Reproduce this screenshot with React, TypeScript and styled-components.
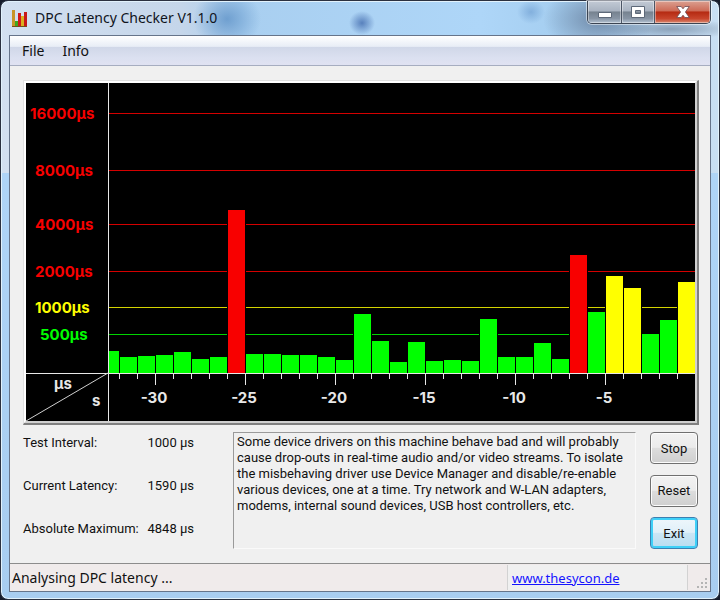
import React from "react";
import styled, { createGlobalStyle } from "styled-components";

const uiFont = `"Noto Sans", "Open Sans", sans-serif`;
const dialogFont = `Roboto, "DejaVu Sans Condensed", sans-serif`;

const GlobalStyle = createGlobalStyle`
  * { box-sizing: border-box; }
  body { margin: 0; background: #171c2b; }
`;

const Window = styled.main`
  display: flex;
  flex-direction: column;
  min-height: 100vh;
  padding: 0 8px 7px;
  border: 1px solid #2b3140;
  border-radius: 8px;
  box-shadow: inset 0 0 0 1px #e2f2fc;
  background:
    radial-gradient(ellipse 34px 30px at 226px 18px, #5f93c8cc, #5f93c800),
    radial-gradient(ellipse 13px 12px at 361px 22px, #4b74b4dd, #4b74b400),
    radial-gradient(ellipse 14px 12px at 530px 11px, #6f9fd2aa, #6f9fd200),
    radial-gradient(ellipse 56px 34px at 598px 18px, #5f7796cc, #5f779600),
    radial-gradient(ellipse 70px 10px at 670px 28px, #74889fb0, #74889f00),
    linear-gradient(90deg, #d3e0f0 0, #c5d6ea 180px, #a9cff0 240px, #aed6f8 480px, #a5cef0 560px, #c9dff3 100%) 0 0 / 100% 172px no-repeat,
    linear-gradient(#b1d7fa, #a8cdf0);
  font: 14px ${uiFont};
  color: #111;
`;

const TitleBar = styled.header`
  display: flex;
  align-items: flex-start;
  height: 34px;
`;

const Title = styled.h1`
  flex: 1;
  display: flex;
  align-items: center;
  gap: 6px;
  height: 33px;
  margin: 0;
  padding-left: 2px;
  font: 14px ${uiFont};
  color: #10141c;
`;

const Controls = styled.div`
  display: flex;
  height: 23px;
  border: 1px solid #3b4452;
  border-top: 0;
  border-radius: 0 0 5px 5px;
  box-shadow: 0 0 0 1px #ffffff80;
  overflow: hidden;
`;

const Caption = styled.button<{ $close?: boolean }>`
  display: grid;
  place-items: center;
  width: ${(p) => (p.$close ? 56 : 33)}px;
  padding: 0;
  border: 0;
  border-left: ${(p) => (p.$close ? "1px solid #4c2020" : "0")};
  box-shadow: inset 0 0 0 1px #ffffff66;
  background: ${(p) =>
    p.$close
      ? "linear-gradient(#dba091 0, #cd6b57 45%, #b52a12 50%, #c8452c 80%, #d98a72)"
      : "linear-gradient(#c2cad5 0, #a9b3c1 45%, #76828f 50%, #8895a5 80%, #b3c2d2)"};
  & + & { border-left: 1px solid #4b5565; }
`;

const Client = styled.div`
  flex: 1;
  display: flex;
  flex-direction: column;
  border: 1px solid #66748a;
  background: #f0f0f0;
`;

const MenuBar = styled.nav`
  display: flex;
  gap: 18px;
  height: 30px;
  padding: 0 12px;
  border-bottom: 1px solid #a6adc0;
  background: linear-gradient(#fff 0, #e8edf6 36%, #d0d7e8 38%, #dbe0f0 75%, #e0e2f2);
`;

const MenuItem = styled.button`
  padding: 0 0 1px;
  border: 0;
  background: none;
  font: 14px ${uiFont};
  color: #111;
`;

const Body = styled.div`
  flex: 1;
  padding: 14px 11px 14px 13px;
`;

const ChartFrame = styled.figure`
  margin: 0;
  border: solid;
  border-width: 1px 2px 2px 1px;
  border-color: #e0e0e0 #808080 #808080 #e0e0e0;
`;

const ChartBezel = styled.div`
  border: 2px solid;
  border-color: #fff #d0d0d0 #d0d0d0 #fff;
`;

const Chart = styled.svg`
  display: block;
  width: 100%;
  height: auto;
  background: #000;
  font: bold 15px Inter, sans-serif;
`;

const Lower = styled.section`
  display: grid;
  grid-template-columns: 210px 1fr 48px;
  height: 117px;
  margin: 7px 1px 0 0;
`;

const Stats = styled.dl`
  display: grid;
  grid-template-columns: 116px 55px;
  grid-auto-rows: 22px;
  row-gap: 21px;
  margin: 0;
  font: 13px/22px ${dialogFont};
  white-space: nowrap;
  dd { margin: 0; text-align: right; }
`;

const Message = styled.textarea`
  min-width: 0;
  margin: 0 14px 0 0;
  padding: 1px 3px;
  border: 1px solid;
  border-color: #9a9a9a #fafafa #fafafa #9a9a9a;
  outline: 0;
  resize: none;
  overflow: hidden;
  background: transparent;
  font: 13px/16px ${dialogFont};
  color: #111;
`;

const Buttons = styled.div`
  display: flex;
  flex-direction: column;
  justify-content: space-between;
`;

const Button = styled.button<{ $default?: boolean }>`
  height: 32px;
  padding: 0;
  border: 1px solid ${(p) => (p.$default ? "#3c7fb1" : "#707070")};
  border-radius: 4px;
  box-shadow: inset 0 0 0 ${(p) => (p.$default ? "2px #3fd0f8" : "1px #fcfcfc")};
  background: ${(p) =>
    p.$default
      ? "linear-gradient(#eef6fb 0, #e0f0f9 48%, #cbe6f5 50%, #b9dcf0)"
      : "linear-gradient(#f2f2f2 0, #ebebeb 48%, #dddddd 50%, #cfcfcf)"};
  font: 13px ${dialogFont};
  color: #111;
`;

const StatusBar = styled.footer`
  display: flex;
  height: 28px;
  border-top: 1px solid #8c8c8c;
  background: #f0ebeb;
  line-height: 27px;
`;

const StatusText = styled.span`
  flex: 1;
  padding-left: 2px;
`;

const LinkPane = styled.span`
  width: 181px;
  margin: 1px 0;
  padding-left: 4px;
  border: solid #d2d2d2;
  border-width: 0 1px;
  background: #f0f0f0;
  font-size: 13px;
  line-height: 26px;
  a { color: #1414ff; }
`;

const Grip = styled.svg`
  align-self: flex-end;
  width: 22px;
  height: 14px;
`;

const RED = "#f80000";
const YELLOW = "#ffff00";
const GREEN = "#00ff00";

const levels = [
  { label: "16000µs", y: 30, x: 4, fill: RED, line: "#d40000" },
  { label: "8000µs", y: 87, x: 9, fill: RED, line: "#d40000" },
  { label: "4000µs", y: 141, x: 9, fill: RED, line: "#d40000" },
  { label: "2000µs", y: 188, x: 9, fill: RED, line: "#d40000" },
  { label: "1000µs", y: 224, x: 9, fill: YELLOW, line: "#d4d400" },
  { label: "500µs", y: 251, x: 14, fill: GREEN, line: "#00d400" },
];

const BASE = 290;
const heights = [
  22, 16, 17, 18, 21, 14, 16, 163, 19, 19, 18, 18, 16, 13, 59, 32, 11, 31, 12,
  13, 12, 54, 16, 16, 30, 14, 118, 61, 97, 85, 39, 53, 91,
];
const barColor = (h: number) => (h > 100 ? RED : h > 66 ? YELLOW : GREEN);

function LatencyChart() {
  return (
    <Chart
      viewBox="0 0 669 338"
      shapeRendering="crispEdges"
      role="img"
      aria-label="DPC latency history"
    >
      {levels.map((l) => (
        <g key={l.label}>
          <text x={l.x} y={l.y + 6} fill={l.fill}>{l.label}</text>
          <rect x="82" y={l.y} width="587" height="1" fill={l.line} />
        </g>
      ))}
      {heights.map((h, i) => {
        const left = i === 0 ? 83 : 76 + i * 18;
        const right = 93 + i * 18;
        return (
          <g key={i}>
            <rect x={left - 1} y={BASE - h - 1} width={right - left + 2} height={h + 1} fill="#000" />
            <rect x={left} y={BASE - h} width={right - left} height={h} fill={barColor(h)} />
          </g>
        );
      })}
      <g fill="#e8e8e8">
        <rect x="0" y="290" width="669" height="1" />
        <rect x="82" y="0" width="1" height="338" />
        {heights.slice(1).map((_, i) => (
          <rect key={i} x={93 + i * 18} y="291" width="1" height={i % 5 === 2 ? 11 : 5} />
        ))}
        {[-30, -25, -20, -15, -10, -5].map((n, i) => (
          <text key={n} x={128 + i * 90} y="320" textAnchor="middle">{n}</text>
        ))}
        <text x="28" y="306">µs</text>
        <text x="66" y="323">s</text>
      </g>
      <path d="M0 338 82 290" stroke="#d0d0d0" shapeRendering="auto" />
    </Chart>
  );
}

const message = `Some device drivers on this machine behave bad and will probably
cause drop-outs in real-time audio and/or video streams. To isolate
the misbehaving driver use Device Manager and disable/re-enable
various devices, one at a time. Try network and W-LAN adapters,
modems, internal sound devices, USB host controllers, etc.`;

export default function App() {
  return (
    <>
      <GlobalStyle />
      <Window>
        <TitleBar>
          <Title>
            <svg width="18" height="18" viewBox="0 0 18 18" aria-hidden="true">
              <path fill="#c89628" d="M1 1h3v16H1z" />
              <path fill="#3fa820" d="M4 12h4v5H4z" />
              <path fill="#d01818" d="M7 4h3v13H7z" />
              <path fill="#d8b020" d="M10 7h3v10h-3z" />
              <path fill="#c81818" d="M13 3h3v14h-3z" />
              <path stroke="#73501c" d="M1 17.500h15" />
            </svg>
            DPC Latency Checker V1.1.0
          </Title>
          <Controls>
            <Caption aria-label="Minimize">
              <svg width="14" height="12" viewBox="0 0 14 12">
                <path d="M.5 6.500h13v5H.5z" fill="#fff" stroke="#5d6878" />
              </svg>
            </Caption>
            <Caption aria-label="Maximize">
              <svg width="14" height="12" viewBox="0 0 14 12">
                <path d="M.5.500h13v11H.5zM4.500 4.500h5v3h-5z" fill="#fff" stroke="#5d6878" fillRule="evenodd" />
              </svg>
            </Caption>
            <Caption aria-label="Close" $close>
              <svg width="14" height="12" viewBox="0 0 14 12">
                <path d="M.7.500h4.500L7 2.800 8.800.500h4.500L9.400 6l3.900 5.500H8.800L7 9.200l-1.800 2.300H.7L4.600 6z" fill="#fff" stroke="#6c4a50" strokeWidth=".8" />
              </svg>
            </Caption>
          </Controls>
        </TitleBar>
        <Client>
          <MenuBar>
            <MenuItem>File</MenuItem>
            <MenuItem>Info</MenuItem>
          </MenuBar>
          <Body>
            <ChartFrame>
              <ChartBezel>
                <LatencyChart />
              </ChartBezel>
            </ChartFrame>
            <Lower>
              <Stats>
                <dt>Test Interval:</dt>
                <dd>1000 µs</dd>
                <dt>Current Latency:</dt>
                <dd>1590 µs</dd>
                <dt>Absolute Maximum:</dt>
                <dd>4848 µs</dd>
              </Stats>
              <Message readOnly aria-label="Result" value={message} />
              <Buttons>
                <Button>Stop</Button>
                <Button>Reset</Button>
                <Button $default>Exit</Button>
              </Buttons>
            </Lower>
          </Body>
          <StatusBar>
            <StatusText>Analysing DPC latency ...</StatusText>
            <LinkPane>
              <a href="http://www.thesycon.de">www.thesycon.de</a>
            </LinkPane>
            <Grip viewBox="0 0 22 14" aria-hidden="true">
              <path fill="#b4b4b4" d="M17 1h2v2h-2zM13 5h2v2h-2zM17 5h2v2h-2zM9 9h2v2H9zM13 9h2v2h-2zM17 9h2v2h-2z" />
            </Grip>
          </StatusBar>
        </Client>
      </Window>
    </>
  );
}
